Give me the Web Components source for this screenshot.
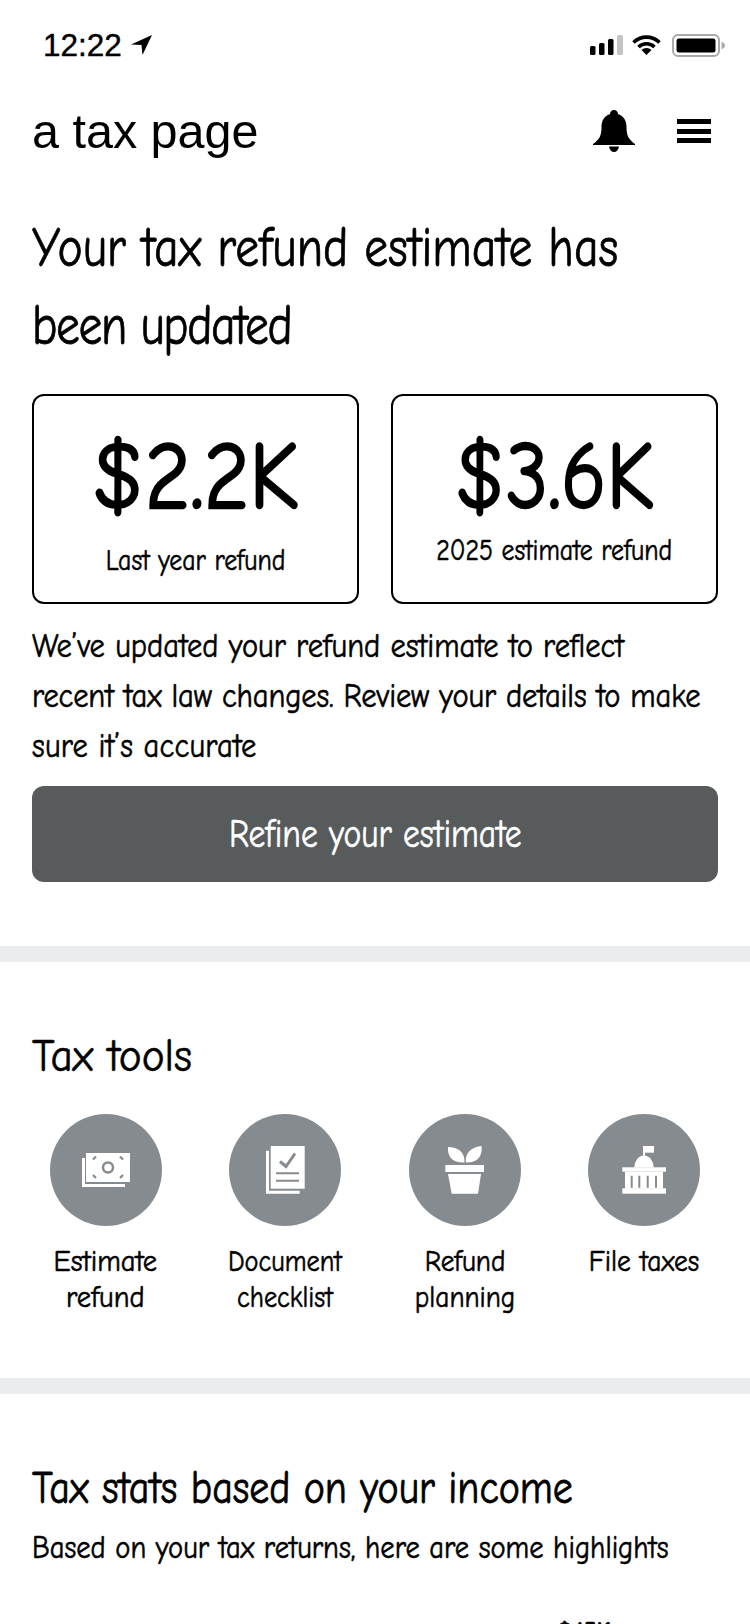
<!DOCTYPE html>
<html>
<head>
<meta charset="utf-8">
<title>a tax page</title>
<style>
    html, body { margin: 0; padding: 0; background: #fff; }
    body {
        width: 750px;
        height: 1624px;
        overflow: hidden;
        color: #000;
        font-family: "Comic Neue", "Lato", "Liberation Sans", sans-serif;
    }
</style>
</head>
<body>
<tax-page>
    <status-bar time="12:22"></status-bar>
    <app-header>a tax page</app-header>
    <refund-panel>
        <span slot="title">Your tax refund estimate has<br><span style="letter-spacing:-1.7px">been updated</span></span>
        <refund-card slot="cards" value="$2.2K" sx="0.91" push="1">Last year refund</refund-card>
        <refund-card slot="cards" value="$3.6K" sx="0.875">2025 estimate refund</refund-card>
        <span slot="copy">We’ve updated your refund estimate to reflect<br><span style="letter-spacing:-0.17px">recent tax law changes. Review your details to make</span><br><span style="letter-spacing:0.2px">sure it’s accurate</span></span>
        <span slot="action">Refine your estimate</span>
    </refund-panel>
    <section-rule></section-rule>
    <tools-panel>
        <span slot="title">Tax tools</span>
        <tool-item icon="money" sx="0.92">Estimate<br>refund</tool-item>
        <tool-item icon="doc" sx="0.85">Document<br>checklist</tool-item>
        <tool-item icon="plant" sx="0.88">Refund<br>planning</tool-item>
        <tool-item icon="gov" sx="0.89">File taxes</tool-item>
    </tools-panel>
    <section-rule></section-rule>
    <stats-panel>
        <span slot="title">Tax stats based on your income</span>
        <span slot="sub">Based on your tax returns, here are some highlights</span>
        <span slot="peek">$45K</span>
    </stats-panel>
</tax-page>
<script>
// the hand font of the reference is narrower than Comic Neue, so text blocks get squeezed
const Squeeze = `
    .Squeeze {
        display: block;
        white-space: nowrap;
        transform: scaleX(var(--sx));
        transform-origin: left top;
        -webkit-text-stroke: var(--st, 0.6px) currentColor;
    }
    .Mid {
        display: block;
        white-space: nowrap;
        transform: scaleX(var(--sx));
        transform-origin: center top;
        -webkit-text-stroke: var(--st, 0.6px) currentColor;
    }
`;

class TaxPage extends HTMLElement
{
    constructor()
    {
        super();
        const Shadow = this.attachShadow({mode: "open"});
        Shadow.innerHTML = `
        <style>
            :host { display: flex; flex-direction: column; width: 750px; }
        </style>
        <slot></slot>
        `;
    }
}

class StatusBar extends HTMLElement
{
    constructor()
    {
        super();
        const Shadow = this.attachShadow({mode: "open"});
        Shadow.innerHTML = `
        <style>
            :host {
                display: flex;
                align-items: center;
                height: 88px;
                padding: 2px 25px 0 43px;
                box-sizing: border-box;
                font-family: "Liberation Sans", sans-serif;
            }
            #Time { font-size: 31.5px; -webkit-text-stroke: 0.4px #000; }
            #Arrow { margin-left: 9px; }
            #Right { margin-left: auto; display: flex; align-items: center; gap: 9px; }
        </style>
        <span id="Time"></span>
        <svg id="Arrow" width="21" height="20" viewBox="0 0 21 20"><path d="M21 0 L0 9.5 L10.5 10 L11.5 20 Z" fill="#000"/></svg>
        <div id="Right">
            <svg width="33" height="20" viewBox="0 0 33 20">
                <rect x="0" y="11" width="5.5" height="9" rx="1.5"/>
                <rect x="9" y="8" width="5.5" height="12" rx="1.5"/>
                <rect x="18" y="4" width="5.5" height="16" rx="1.5"/>
                <rect x="27" y="0" width="6" height="20" rx="1.5" fill="#c4c4c4"/>
            </svg>
            <svg width="29" height="20" viewBox="0 0 29 20">
                <path d="M1.5 7.5 A18.5 18.5 0 0 1 27.5 7.5" fill="none" stroke="#000" stroke-width="3.6"/>
                <path d="M6.5 12 A11.5 11.5 0 0 1 22.5 12" fill="none" stroke="#000" stroke-width="3.6"/>
                <path d="M14.5 20 L9.5 15 A7 7 0 0 1 19.5 15 Z" fill="#000"/>
            </svg>
            <svg width="53" height="23" viewBox="0 0 53 23" style="margin-left:2px">
                <rect x="1" y="1" width="46" height="21" rx="5" fill="none" stroke="#aaa" stroke-width="2"/>
                <rect x="4.5" y="4.5" width="39" height="14" rx="2.5" fill="#000"/>
                <path d="M49.5 8 C52 8.5 53 10 53 11.5 C53 13 52 14.5 49.5 15 Z" fill="#aaa"/>
            </svg>
        </div>
        `;
        Shadow.getElementById("Time").textContent = this.getAttribute("time");
    }
}

class AppHeader extends HTMLElement
{
    constructor()
    {
        super();
        const Shadow = this.attachShadow({mode: "open"});
        Shadow.innerHTML = `
        <style>
            :host {
                display: flex;
                align-items: center;
                height: 86px;
                padding: 0 39px 0 32px;
                font-family: "Liberation Sans", sans-serif;
                font-size: 48.5px;
            }
            #Bell { margin-left: auto; }
            #Menu { margin-left: 42px; display: flex; flex-direction: column; gap: 4.5px; width: 34px; }
            #Menu i { display: block; height: 5px; background: #000; }
        </style>
        <span><slot></slot></span>
        <svg id="Bell" width="42" height="42" viewBox="0 0 42 42">
            <path d="M21 0 C23.5 0 25 1.8 25 4 C31 6 33.5 11 33.5 17 C33.5 25 35 29 42 34 L42 35 L0 35 L0 34 C7 29 8.5 25 8.5 17 C8.5 11 11 6 17 4 C17 1.8 18.5 0 21 0 Z" fill="#000"/>
            <path d="M16 36.5 L26 36.5 C25.5 40 23.5 42 21 42 C18.5 42 16.5 40 16 36.5 Z" fill="#000"/>
        </svg>
        <div id="Menu"><i></i><i></i><i></i></div>
        `;
    }
}

class RefundPanel extends HTMLElement
{
    constructor()
    {
        super();
        const Shadow = this.attachShadow({mode: "open"});
        Shadow.innerHTML = `
        <style>
            ${Squeeze}
            :host { display: flex; flex-direction: column; padding: 35px 32px 64px; }
            #Title { font-size: 57px; line-height: 78px; --sx: 0.836; --st: 0.8px; }
            #Cards { display: grid; grid-template-columns: 1fr 1fr; gap: 32px; margin-top: 29px; }
            #Copy { font-size: 34px; line-height: 50px; margin-top: 17px; --sx: 0.9; }
            #Action {
                display: flex;
                align-items: center;
                justify-content: center;
                height: 96px;
                margin-top: 15px;
                border-radius: 12px;
                background: #575b5c;
                color: #fff;
                font-size: 40px;
                --sx: 0.84;
            }
        </style>
        <div id="Title" class="Squeeze"><slot name="title"></slot></div>
        <div id="Cards"><slot name="cards"></slot></div>
        <div id="Copy" class="Squeeze"><slot name="copy"></slot></div>
        <div id="Action"><span class="Mid"><slot name="action"></slot></span></div>
        `;
    }
}

class RefundCard extends HTMLElement
{
    constructor()
    {
        super();
        const Shadow = this.attachShadow({mode: "open"});
        Shadow.innerHTML = `
        <style>
            ${Squeeze}
            :host {
                display: flex;
                flex-direction: column;
                align-items: center;
                height: 210px;
                box-sizing: border-box;
                border: 2px solid #000;
                border-radius: 12px;
                padding-top: 31px;
            }
            #Value { font-size: 96px; line-height: 100px; --sx: ${this.getAttribute("sx")}; --st: 2.4px; }
            #Label { font-size: 30px; line-height: 36px; margin-top: 6px; --sx: 0.86; }
        </style>
        <div id="Value" class="Mid"></div>
        <div id="Label" class="Mid"><slot></slot></div>
        `;
        Shadow.getElementById("Value").textContent = this.getAttribute("value");
        if (this.hasAttribute("push")) {
            Shadow.getElementById("Label").style.marginTop = "16px";
        }
    }
}

class SectionRule extends HTMLElement
{
    constructor()
    {
        super();
        const Shadow = this.attachShadow({mode: "open"});
        Shadow.innerHTML = `
        <style>
            :host { display: block; height: 16px; background: #e9eded; }
        </style>
        `;
    }
}

class ToolsPanel extends HTMLElement
{
    constructor()
    {
        super();
        const Shadow = this.attachShadow({mode: "open"});
        Shadow.innerHTML = `
        <style>
            ${Squeeze}
            :host { display: flex; flex-direction: column; height: 416px; box-sizing: border-box; padding-top: 67px; }
            #Title { font-size: 46px; line-height: 56px; margin-left: 32px; --sx: 0.94; }
            #Grid { display: grid; grid-template-columns: repeat(4, 1fr); padding: 0 16px; margin-top: 29px; }
        </style>
        <div id="Title" class="Squeeze"><slot name="title"></slot></div>
        <div id="Grid"><slot></slot></div>
        `;
    }
}

const ToolIcons = {
    money: `
        <rect x="36" y="39" width="44" height="29" fill="#fff"/>
        <path d="M33.5 44 V71.5 H75" fill="none" stroke="#fff" stroke-width="3"/>
        <circle cx="58" cy="53.5" r="5" fill="none" stroke="#868b8f" stroke-width="2.5"/>
        <path d="M46 42.5 L43 45.5 M70 42.5 L73 45.5 M43 61 L46 64 M73 61 L70 64" stroke="#868b8f" stroke-width="2.2" fill="none"/>
    `,
    doc: `
        <rect x="41.7" y="32" width="34" height="42.7" fill="#fff"/>
        <path d="M38.5 36.7 V78.2 H70.7" fill="none" stroke="#fff" stroke-width="3"/>
        <path d="M51 47.5 L57 52.5 L66 39.5" fill="none" stroke="#868b8f" stroke-width="3"/>
        <path d="M47 59.3 H70 M47 66.7 H70" stroke="#868b8f" stroke-width="2"/>
    `,
    plant: `
        <path d="M39 33 C49 33 56 38 55.5 48.5 C45 49 38 44 39 33 Z" fill="#fff"/>
        <path d="M72.7 32 C73.5 44 67 49 56.8 48.5 C56 38 63 33 72.7 32 Z" fill="#fff"/>
        <rect x="36.3" y="51" width="38.7" height="7" fill="#fff"/>
        <path d="M39 60 H72 L69 79.7 H42.7 Z" fill="#fff"/>
    `,
    gov: `
        <rect x="55" y="32" width="2" height="10" fill="#fff"/>
        <rect x="56" y="32" width="10" height="6.7" fill="#fff"/>
        <path d="M46.3 53.5 A9.7 12 0 0 1 65.7 53.5 Z" fill="#fff"/>
        <rect x="34.3" y="53.3" width="43.7" height="4.4" fill="#fff"/>
        <rect x="37" y="57.7" width="38" height="17" fill="#fff"/>
        <rect x="34.3" y="74.3" width="43.7" height="5.4" fill="#fff"/>
        <path d="M43.7 61.7 V73.7 M51.3 61.7 V73.7 M59.7 61.7 V73.7 M68 61.7 V73.7" stroke="#868b8f" stroke-width="2"/>
    `
};

class ToolItem extends HTMLElement
{
    constructor()
    {
        super();
        const Shadow = this.attachShadow({mode: "open"});
        Shadow.innerHTML = `
        <style>
            ${Squeeze}
            :host { display: flex; flex-direction: column; align-items: center; text-align: center; }
            #Dot { width: 112px; height: 112px; border-radius: 50%; background: #868b8f; }
            svg { display: block; }
            #Label { font-size: 31px; line-height: 36px; margin-top: 17px; --sx: ${this.getAttribute("sx")}; }
        </style>
        <div id="Dot"><svg width="112" height="112" viewBox="0 0 112 112">${ToolIcons[this.getAttribute("icon")]}</svg></div>
        <div id="Label" class="Mid"><slot></slot></div>
        `;
    }
}

class StatsPanel extends HTMLElement
{
    constructor()
    {
        super();
        const Shadow = this.attachShadow({mode: "open"});
        Shadow.innerHTML = `
        <style>
            ${Squeeze}
            :host { display: flex; flex-direction: column; padding: 67px 32px 0; }
            #Title { font-size: 46px; line-height: 56px; --sx: 0.868; --st: 0.8px; }
            #Sub { font-size: 32px; line-height: 44px; margin-top: 9px; --sx: 0.893; }
            #Peek { font-size: 26px; line-height: 30px; margin-top: 47px; margin-left: 525px; font-weight: 700; --sx: 0.95; }
        </style>
        <div id="Title" class="Squeeze"><slot name="title"></slot></div>
        <div id="Sub" class="Squeeze"><slot name="sub"></slot></div>
        <div id="Peek" class="Squeeze"><slot name="peek"></slot></div>
        `;
    }
}

customElements.define("tax-page", TaxPage);
customElements.define("status-bar", StatusBar);
customElements.define("app-header", AppHeader);
customElements.define("refund-panel", RefundPanel);
customElements.define("refund-card", RefundCard);
customElements.define("section-rule", SectionRule);
customElements.define("tools-panel", ToolsPanel);
customElements.define("tool-item", ToolItem);
customElements.define("stats-panel", StatsPanel);
</script>
</body>
</html>
